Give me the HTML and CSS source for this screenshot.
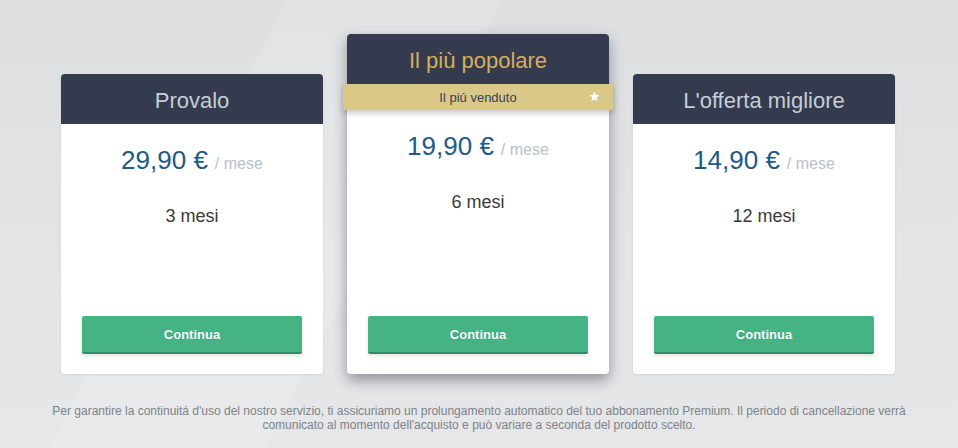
FILE: index.html
```html
<!DOCTYPE html>
<html lang="it">
<head>
<meta charset="utf-8">
<title>Abbonamento Premium</title>
<link rel="stylesheet" href="styles.css">
</head>
<body>
<main class="page">
  <section class="plans">
    <article class="card">
      <header class="card-head"><h2 class="card-title">Provalo</h2></header>
      <div class="card-body">
        <p class="price"><span class="amount">29,90 €</span><span class="per">/ mese</span></p>
        <p class="duration">3 mesi</p>
        <button class="btn">Continua</button>
      </div>
    </article>
    <article class="card featured">
      <header class="card-head"><h2 class="card-title gold">Il più popolare</h2></header>
      <div class="ribbon">
        <span></span>
        <span class="ribbon-text">Il piú venduto</span>
        <svg class="star" viewBox="0 0 24 24" width="11" height="11"><path d="M12 1.5l3.2 6.9 7.3.8-5.5 5 1.6 7.4L12 17.8 5.4 21.6 7 14.2 1.5 9.2l7.3-.8z" fill="#fff"/></svg>
      </div>
      <div class="card-body">
        <p class="price"><span class="amount">19,90 €</span><span class="per">/ mese</span></p>
        <p class="duration">6 mesi</p>
        <button class="btn">Continua</button>
      </div>
    </article>
    <article class="card">
      <header class="card-head"><h2 class="card-title">L'offerta migliore</h2></header>
      <div class="card-body">
        <p class="price"><span class="amount">14,90 €</span><span class="per">/ mese</span></p>
        <p class="duration">12 mesi</p>
        <button class="btn">Continua</button>
      </div>
    </article>
  </section>
  <p class="note">Per garantire la continuitá d'uso del nostro servizio, ti assicuriamo un prolungamento automatico del tuo abbonamento Premium. Il periodo di cancellazione verrà comunicato al momento dell'acquisto e può variare a seconda del prodotto scelto.</p>
</main>
</body>
</html>
```

FILE: styles.css
```css
* { box-sizing: border-box; }
html, body { margin: 0; height: 100%; }
body {
  font-family: "Liberation Sans", Arial, sans-serif;
  background:
    linear-gradient(118deg, rgba(255,255,255,0) 0 24%, rgba(255,255,255,.14) 24% 42%, rgba(255,255,255,0) 42% 100%),
    linear-gradient(180deg, #dcdee0 0%, #e1e3e5 45%, #e5e7e8 100%);
  overflow: hidden;
}
.page {
  padding-top: 34px;
  display: flex;
  flex-direction: column;
  align-items: center;
}
.plans {
  display: flex;
  align-items: flex-end;
  gap: 24px;
  margin-right: 2px;
}
.card {
  width: 262px;
  height: 300px;
  background: #fff;
  border-radius: 4px;
  display: flex;
  flex-direction: column;
  box-shadow: 0 1px 3px rgba(0,0,0,.08);
}
.card.featured {
  height: 340px;
  box-shadow: 0 6px 14px rgba(40,45,60,.45);
}
.card-head {
  height: 50px;
  padding-top: 3px;
  background: #343b4f;
  border-radius: 4px 4px 0 0;
  display: flex;
  align-items: center;
  justify-content: center;
}
.card-title {
  margin: 0;
  font-weight: normal;
  font-size: 22px;
  color: #c6cdd6;
}
.card-title.gold { color: #d6ae5c; }
.ribbon {
  position: relative;
  z-index: 1;
  margin: 0 -4px;
  height: 26px;
  background: #d9c887;
  display: grid;
  grid-template-columns: 1fr auto 1fr;
  align-items: center;
  box-shadow: 0 3px 6px rgba(0,0,0,.22);
}
.ribbon-text {
  font-size: 13px;
  color: #3b3f52;
}
.star {
  justify-self: end;
  margin-right: 13px;
  margin-top: -1px;
}
.card-body {
  flex: 1;
  display: flex;
  flex-direction: column;
  align-items: center;
  padding: 21px 21px 20px;
}
.price {
  margin: 0;
  line-height: 30px;
  white-space: nowrap;
}
.amount {
  font-size: 26px;
  color: #1e5a86;
}
.per {
  margin-left: 7px;
  font-size: 16px;
  color: #b8c0c8;
}
.duration {
  margin: 25px 0 0;
  font-size: 18px;
  line-height: 24px;
  color: #3a3a3a;
}
.btn {
  margin-top: auto;
  width: 100%;
  height: 38px;
  border: 0;
  border-bottom: 2px solid #2f8c64;
  border-radius: 2px;
  background: #45b384;
  color: #fff;
  font-family: "Liberation Sans", Arial, sans-serif;
  font-weight: bold;
  font-size: 13px;
  text-shadow: 0 0 1px rgba(0,0,0,.25);
  box-shadow: 0 2px 4px rgba(0,0,0,.12);
  cursor: pointer;
}
.note {
  width: 866px;
  margin: 30px 0 0;
  text-align: center;
  font-size: 12px;
  line-height: 14px;
  color: #7e8388;
}
```
